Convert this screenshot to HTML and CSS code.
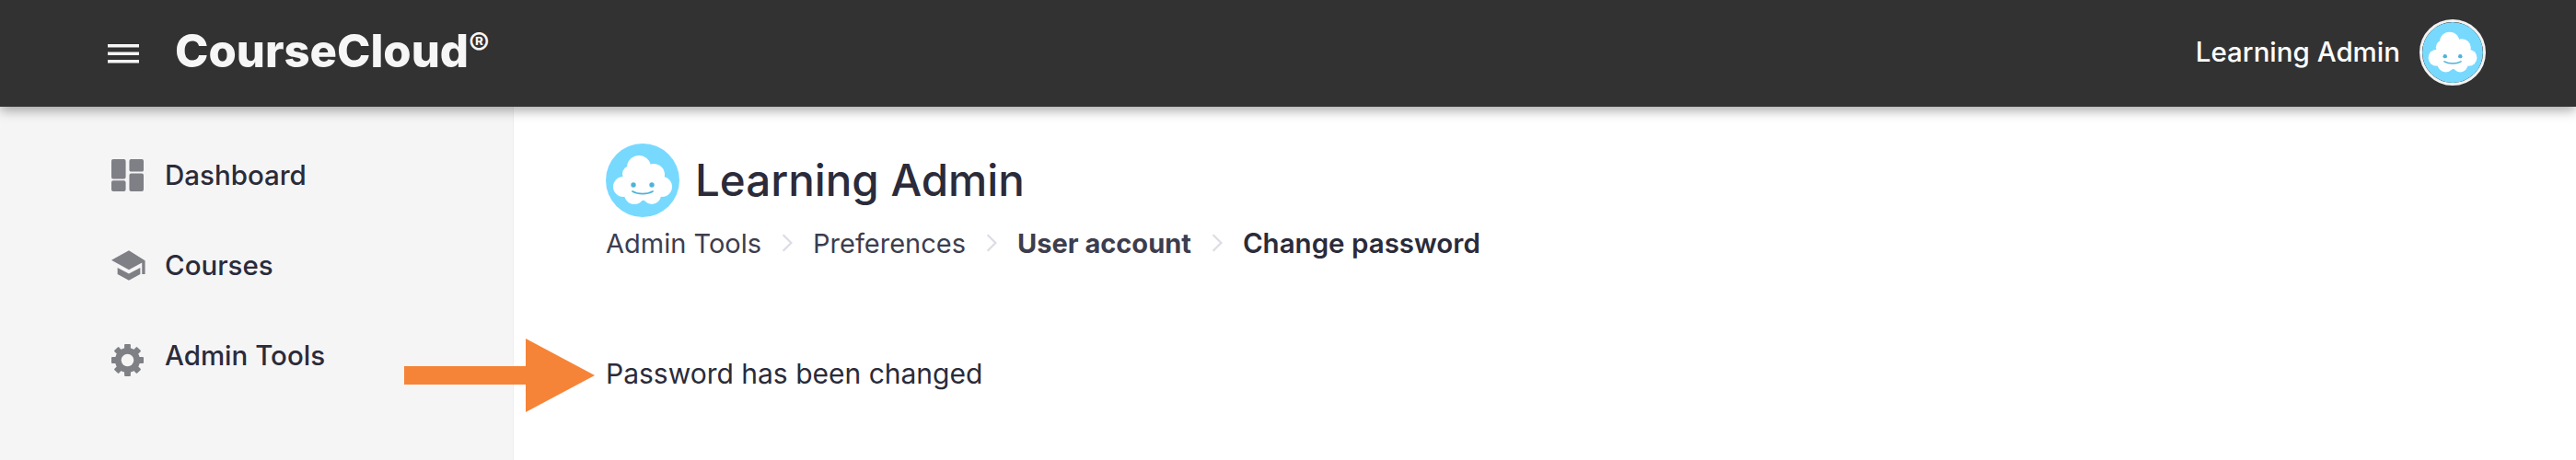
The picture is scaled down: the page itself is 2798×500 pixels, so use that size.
FILE: index.html
```html
<!DOCTYPE html>
<html lang="en">
<head>
  <meta charset="UTF-8">
  <title>CourseCloud</title>
  <link rel="stylesheet" href="styles.css">
</head>
<body>

  <svg class="defs" width="0" height="0">
    <symbol id="cloud" viewBox="0 0 80 80">
      <circle cx="40" cy="40" r="40" fill="#78d9ff"/>
      <g fill="#fff">
        <circle cx="36" cy="26" r="13"/>
        <circle cx="27" cy="33" r="9"/>
        <circle cx="52" cy="34" r="12"/>
        <circle cx="19" cy="47" r="11"/>
        <circle cx="61" cy="47" r="11"/>
        <circle cx="31" cy="55" r="11"/>
        <circle cx="50" cy="56" r="10"/>
        <circle cx="40" cy="44" r="18"/>
      </g>
      <circle cx="30" cy="45" r="2.700" fill="#4fb3d9"/>
      <circle cx="50" cy="45" r="2.700" fill="#4fb3d9"/>
      <path fill="none" stroke="#4fb3d9" stroke-width="1.800" stroke-linecap="round" d="M29 52c6 3.500 16 3.500 22 0"/>
    </symbol>
  </svg>

  <header class="topbar">
    <div class="topbar-left">
      <svg class="burger" viewBox="0 0 34 24"><path fill="#f6f6f6" d="M0 2h34v3.500H0zM0 10.500h34V14H0zM0 19h34v3.500H0z"/></svg>
      <span class="logo">CourseCloud<sup>®</sup></span>
    </div>
    <div class="topbar-right">
      <span class="username">Learning Admin</span>
      <svg class="user-pic" viewBox="0 0 80 80"><use href="#cloud"/></svg>
    </div>
  </header>

  <div class="layout">
    <aside class="sidebar">
      <a class="nav-item">
        <svg class="nav-icon" viewBox="0 0 36 36"><path d="M2 0h12a2 2 0 0 1 2 2v18a2 2 0 0 1-2 2H2a2 2 0 0 1-2-2V2a2 2 0 0 1 2-2zM22 0h12a2 2 0 0 1 2 2v10a2 2 0 0 1-2 2H22a2 2 0 0 1-2-2V2a2 2 0 0 1 2-2zM22 16h12a2 2 0 0 1 2 2v16a2 2 0 0 1-2 2H22a2 2 0 0 1-2-2V18a2 2 0 0 1 2-2zM2 24h12a2 2 0 0 1 2 2v8a2 2 0 0 1-2 2H2a2 2 0 0 1-2-2v-8a2 2 0 0 1 2-2z"/></svg>
        <span>Dashboard</span>
      </a>
      <a class="nav-item">
        <svg class="nav-icon cap" viewBox="0 0 40 34"><path d="M20 0 0 11l20 11 15-8.200V27h3.500V11.500zM7 19.500V27l13 7 13-7v-7.500L20 26.500z"/></svg>
        <span>Courses</span>
      </a>
      <a class="nav-item">
        <svg class="nav-icon gear" viewBox="0 0 36 36">
          <g>
            <rect x="14.500" y="0" width="7" height="36" rx="1"/>
            <rect x="14.500" y="0" width="7" height="36" rx="1" transform="rotate(45 18 18)"/>
            <rect x="14.500" y="0" width="7" height="36" rx="1" transform="rotate(90 18 18)"/>
            <rect x="14.500" y="0" width="7" height="36" rx="1" transform="rotate(135 18 18)"/>
          </g>
          <circle cx="18" cy="18" r="10.500" fill="none" stroke="#7f7f86" stroke-width="7"/>
          <circle cx="18" cy="18" r="7" fill="#f5f5f5"/>
        </svg>
        <span>Admin Tools</span>
      </a>
    </aside>

    <main class="content">
      <div class="page-head">
        <svg class="page-pic" viewBox="0 0 80 80"><use href="#cloud"/></svg>
        <h1>Learning Admin</h1>
      </div>
      <nav class="crumbs">
        <a>Admin Tools</a>
        <svg class="crumb-sep" viewBox="0 0 12 20"><path d="M2 2l8 8-8 8"/></svg>
        <a>Preferences</a>
        <svg class="crumb-sep" viewBox="0 0 12 20"><path d="M2 2l8 8-8 8"/></svg>
        <a class="bold">User account</a>
        <svg class="crumb-sep" viewBox="0 0 12 20"><path d="M2 2l8 8-8 8"/></svg>
        <span class="current">Change password</span>
      </nav>
      <p class="message">Password has been changed</p>
    </main>
  </div>

  <!-- annotation drawn over the screenshot -->
  <svg class="arrow" viewBox="0 0 207 80"><path fill="#f58438" d="M0 30h132V0l75 40-75 40V50H0z"/></svg>

</body>
</html>
```

FILE: styles.css
```css
* {
  box-sizing: border-box;
}

html, body {
  height: 100%;
}

body {
  margin: 0;
  font-family: Inter, "Noto Sans", sans-serif;
  background: #fff;
  color: #2b2b3a;
  overflow: hidden;
  position: relative;
}

.defs {
  position: absolute;
}

.topbar {
  height: 116px;
  background: #323232;
  display: flex;
  align-items: center;
  justify-content: space-between;
  padding: 0 98px 0 116px;
  box-shadow: 0 4px 12px rgba(0,0,0,0.35);
  position: relative;
  z-index: 2;
}

.topbar-left {
  display: flex;
  align-items: center;
  gap: 38px;
}

.burger {
  width: 36px;
  height: 24px;
}

.logo {
  font-weight: 800;
  font-size: 49px;
  color: #f6f6f6;
  margin-top: -5px;
}

.logo sup {
  font-size: 34px;
  font-weight: 600;
  line-height: 0;
  vertical-align: 13px;
}

.topbar-right {
  display: flex;
  align-items: center;
  gap: 21px;
}

.username {
  font-size: 29.500px;
  font-weight: 500;
  color: #fff;
  margin-top: -5px;
}

.user-pic {
  width: 72px;
  height: 72px;
  border-radius: 50%;
  border: 3px solid #f2f2f2;
  margin-top: -2px;
}

.layout {
  display: flex;
  height: 384px;
}

.sidebar {
  width: 558px;
  background: #f5f5f5;
  border-right: 1px solid #eee;
  padding: 25px 0 0 121px;
}

.nav-item {
  display: flex;
  align-items: center;
  height: 98px;
  font-size: 29.500px;
  font-weight: 500;
  color: #2b2b3a;
}

.nav-item span {
  margin-left: 23px;
}

.nav-icon {
  width: 35px;
  height: 35px;
  fill: #7f7f86;
  flex-shrink: 0;
}

.nav-icon.cap {
  width: 38px;
  height: 33px;
  margin-right: -3px;
}

.nav-icon.gear {
  margin-top: 10px;
}

.content {
  flex: 1;
  padding: 40px 0 0 100px;
}

.page-head {
  display: flex;
  align-items: center;
  gap: 17px;
}

.page-pic {
  width: 80px;
  height: 80px;
}

h1 {
  margin: -2px 0 0;
  font-size: 47.500px;
  font-weight: 500;
  color: #2b2b3a;
}

.crumbs {
  display: flex;
  align-items: center;
  margin-top: 10px;
  font-size: 29px;
  color: #3d3d4e;
}

.crumb-sep {
  width: 14px;
  height: 22px;
  margin: 0 21px 0 21px;
  fill: none;
  stroke: #dcdce4;
  stroke-width: 2;
}

.bold {
  font-weight: 700;
}

.current {
  font-weight: 600;
  font-size: 29.500px;
  color: #2b2b3a;
}

.message {
  margin: 106px 0 0;
  font-size: 30px;
  color: #2b2b3a;
}

.arrow {
  position: absolute;
  left: 439px;
  top: 368px;
  width: 207px;
  height: 80px;
}
```
